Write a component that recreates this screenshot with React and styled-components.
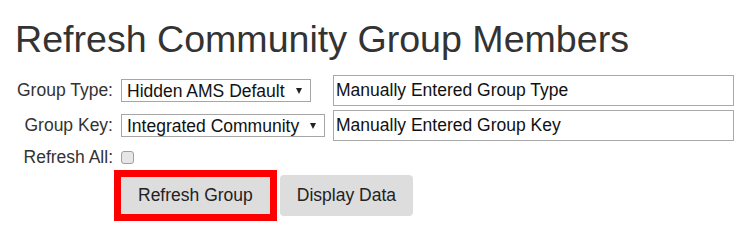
import styled, { createGlobalStyle } from "styled-components";

const GlobalStyle = createGlobalStyle`
  body {
    margin: 0;
    background: #fff;
    font-family: "Liberation Sans", Arial, sans-serif;
    color: #333;
  }
`;

const rows = [
  {
    label: "Group Type:",
    option: "Hidden AMS Default",
    text: "Manually Entered Group Type",
  },
  {
    label: "Group Key:",
    option: "Integrated Community",
    text: "Manually Entered Group Key",
  },
];

const App = () => {
  return (
    <>
      <GlobalStyle />
      <Page>
        <Title>Refresh Community Group Members</Title>
        <Form>
          {rows.map((row) => (
            <FormRow key={row.label}>
              <Label>{row.label}</Label>
              <SelectWrap>
                <Select defaultValue={row.option}>
                  <option>{row.option}</option>
                </Select>
                <Arrow />
              </SelectWrap>
              <TextInput defaultValue={row.text} />
            </FormRow>
          ))}
          <FormRow>
            <Label>Refresh All:</Label>
            <Checkbox type="checkbox" />
          </FormRow>
        </Form>
        <ButtonRow>
          <Button $highlight>Refresh Group</Button>
          <Button>Display Data</Button>
        </ButtonRow>
      </Page>
    </>
  );
};

export default App;

// PAGE
const Page = styled.div`
  padding: 18px 21px 0 15px;
`;

// HEADING
const Title = styled.h1`
  margin: 0 0 15px;
  font-size: 37.6px;
  line-height: 42px;
  font-weight: normal;
  color: #333;
`;

// FORM GRID
const Form = styled.div`
  display: grid;
  grid-template-columns: 98px auto 1fr;
  grid-template-rows: 31px 31px 24px;
  column-gap: 8px;
  row-gap: 4px;
`;

// one row of the form lays its cells straight into the grid
const FormRow = styled.div`
  display: contents;
`;

const Label = styled.label`
  align-self: center;
  text-align: right;
  font-size: 17.5px;
  color: #333;
  white-space: nowrap;
`;

// SELECT
const SelectWrap = styled.div`
  position: relative;
  align-self: center;
  justify-self: start;
`;

const Select = styled.select`
  appearance: none;
  display: block;
  height: 23px;
  box-sizing: border-box;
  margin: 0;
  padding: 0 24px 0 5px;
  border: 1px solid #a6a6a6;
  border-radius: 0;
  background: #fff;
  font-family: "Liberation Sans", Arial, sans-serif;
  font-size: 17.5px;
  color: #111;
  outline: none;
`;

const Arrow = styled.span`
  position: absolute;
  right: 9px;
  top: 9px;
  width: 0;
  height: 0;
  border-left: 3.5px solid transparent;
  border-right: 3.5px solid transparent;
  border-top: 6px solid #222;
  pointer-events: none;
`;

// TEXT INPUT
const TextInput = styled.input`
  height: 31px;
  box-sizing: border-box;
  margin: 0;
  padding: 0 2px;
  border: 1px solid #a9a9a9;
  font-family: "Liberation Sans", Arial, sans-serif;
  font-size: 17.5px;
  color: #111;
  outline: none;
`;

// CHECKBOX
const Checkbox = styled.input`
  appearance: none;
  align-self: center;
  width: 13px;
  height: 13px;
  margin: 1px 0 0;
  border: 1px solid #a0a0a0;
  border-radius: 3px;
  background: #e6e6e6;
`;

// BUTTONS
const ButtonRow = styled.div`
  display: flex;
  align-items: center;
  gap: 3px;
  margin-top: 1px;
  padding-left: 99px;
`;

const Button = styled.button`
  height: ${(p) => (p.$highlight ? "51px" : "41px")};
  margin: 0;
  padding: 0 17px;
  border: ${(p) => (p.$highlight ? "7px solid #ff0000" : "none")};
  border-radius: ${(p) => (p.$highlight ? "0" : "4px")};
  background: #dddddd;
  font-family: "Liberation Sans", Arial, sans-serif;
  font-size: 17.5px;
  color: #222;
  cursor: pointer;
`;
